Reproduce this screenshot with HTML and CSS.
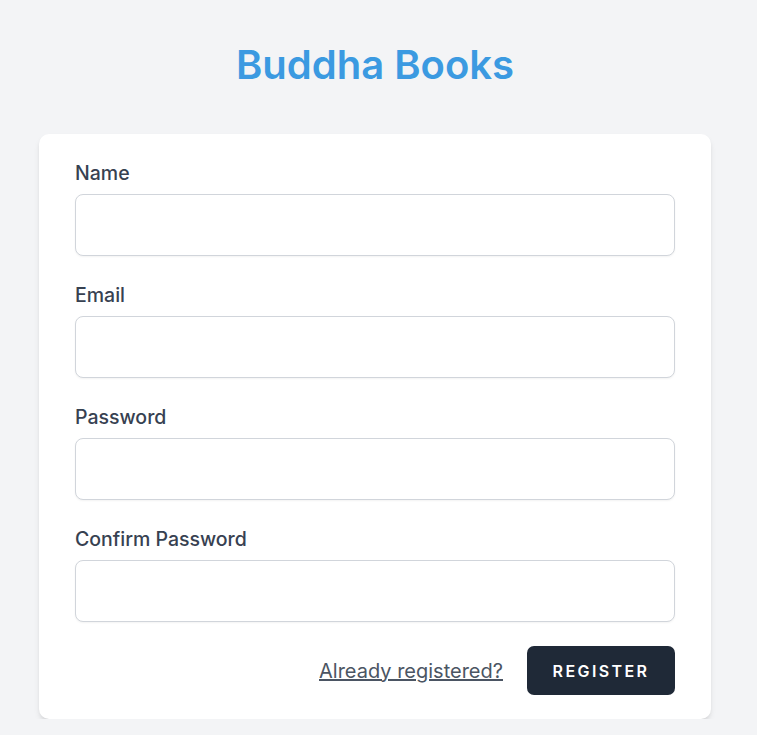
FILE: index.html
```html
<!DOCTYPE html>
<html lang="en">
<head>
<meta charset="utf-8">
<title>Buddha Books - Register</title>
<link rel="stylesheet" href="styles.css">
</head>
<body>
<div class="page">
  <h1 class="brand">Buddha Books</h1>
  <form class="card">
    <div class="field">
      <label class="label" for="name">Name</label>
      <input class="input" id="name" type="text">
    </div>
    <div class="field">
      <label class="label" for="email">Email</label>
      <input class="input" id="email" type="email">
    </div>
    <div class="field">
      <label class="label" for="password">Password</label>
      <input class="input" id="password" type="password">
    </div>
    <div class="field">
      <label class="label" for="confirm">Confirm Password</label>
      <input class="input" id="confirm" type="password">
    </div>
    <div class="actions">
      <a class="link" href="#">Already registered?</a>
      <button class="button" type="button">Register</button>
    </div>
  </form>
</div>
</body>
</html>
```
FILE: styles.css
```css
* { box-sizing: border-box; }
html, body { margin: 0; padding: 0; }
body {
  background: #f3f4f6;
  font-family: Inter, "Noto Sans", sans-serif;
  color: #374151;
}
.page {
  display: flex;
  flex-direction: column;
  align-items: center;
  padding: 36px 7px 0 0;
}
.brand {
  margin: 0 0 40px;
  font-size: 40px;
  line-height: 58px;
  font-weight: 600;
  color: #3b9ae1;
}
.card {
  width: 672px;
  background: #fff;
  border-radius: 10px;
  box-shadow: 0 4px 6px -1px rgba(0,0,0,0.1), 0 2px 4px -2px rgba(0,0,0,0.1);
  padding: 25px 36px 24px;
  display: flex;
  flex-direction: column;
  gap: 25px;
}
.field { display: flex; flex-direction: column; }
.label {
  font-size: 19.5px;
  line-height: 28px;
  font-weight: 450;
  color: #374151;
  margin-bottom: 7px;
}
.input {
  height: 62px;
  border: 1px solid #d1d5db;
  border-radius: 8px;
  font-size: 18px;
  padding: 0 16px;
  box-shadow: 0 1px 2px rgba(0,0,0,0.05);
}
.actions {
  display: flex;
  justify-content: flex-end;
  align-items: center;
  gap: 24px;
  margin-top: -1px;
}
.link {
  font-size: 20px;
  color: #4b5563;
  text-decoration: underline;
}
.button {
  height: 49px;
  width: 148px;
  border: none;
  border-radius: 7px;
  background: #1f2937;
  color: #fff;
  font-family: inherit;
  font-size: 16px;
  font-weight: 600;
  letter-spacing: 0.15em;
  text-transform: uppercase;
}
```
